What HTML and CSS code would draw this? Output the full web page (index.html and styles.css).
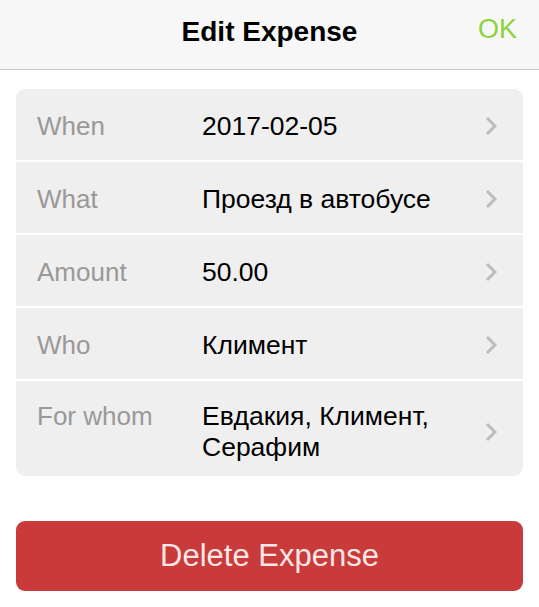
FILE: index.html
```html
<!DOCTYPE html>
<html>
  <head>
    <title>Edit Expense</title>
    <link rel="stylesheet" href="styles.css">
  </head>
  <body>
    <div class="header">
      <div class="title">Edit Expense</div>
      <div class="ok">OK</div>
    </div>

    <div class="card">
      <div class="row">
        <div class="label">When</div>
        <div class="value">2017-02-05</div>
        <svg class="chevron" viewBox="0 0 12 20"><path d="M2 2 L10 10 L2 18" /></svg>
      </div>
      <div class="row">
        <div class="label">What</div>
        <div class="value">Проезд в автобусе</div>
        <svg class="chevron" viewBox="0 0 12 20"><path d="M2 2 L10 10 L2 18" /></svg>
      </div>
      <div class="row">
        <div class="label">Amount</div>
        <div class="value">50.00</div>
        <svg class="chevron" viewBox="0 0 12 20"><path d="M2 2 L10 10 L2 18" /></svg>
      </div>
      <div class="row">
        <div class="label">Who</div>
        <div class="value">Климент</div>
        <svg class="chevron" viewBox="0 0 12 20"><path d="M2 2 L10 10 L2 18" /></svg>
      </div>
      <div class="row tall">
        <div class="label">For whom</div>
        <div class="value">Евдакия, Климент,<br />Серафим</div>
        <svg class="chevron" viewBox="0 0 12 20"><path d="M2 2 L10 10 L2 18" /></svg>
      </div>
    </div>

    <div class="delete">Delete Expense</div>
  </body>
</html>
```

FILE: styles.css
```css
body {
  font-family: "Liberation Sans", Arial, sans-serif;
  margin: 0;
  padding: 0;
  background-color: #fff;
  color: #000;
}
.header {
  height: 69px;
  background-color: #f7f7f7;
  border-bottom: 1px solid #c9c9c9;
  display: flex;
  align-items: center;
  justify-content: center;
  position: relative;
}
.title {
  font-size: 28px;
  font-weight: bold;
  margin-top: -5px;
}
.ok {
  position: absolute;
  right: 22px;
  top: 14px;
  font-size: 27px;
  color: #8cd23a;
}
.card {
  margin: 19px 16px 0;
  background-color: #efefef;
  border-radius: 9px;
  overflow: hidden;
}
.row {
  display: flex;
  align-items: center;
  box-sizing: border-box;
  height: 71px;
  padding: 3px 26px 0 21px;
  font-size: 26px;
}
.row + .row {
  border-top: 2px solid #fff;
  height: 73px;
}
.row.tall {
  height: 97px;
  align-items: flex-start;
  padding-top: 20px;
  line-height: 31px;
}
.label {
  width: 165px;
  color: #999;
}
.value {
  flex: 1;
  font-size: 26.5px;
}
.chevron {
  width: 12px;
  height: 20px;
  fill: none;
  stroke: #bcbcbc;
  stroke-width: 3;
}
.row.tall .chevron {
  align-self: center;
  margin-top: -14px;
}
.delete {
  margin: 45px 16px 0;
  height: 70px;
  border-radius: 9px;
  background-color: #c93a3a;
  color: #fde6e6;
  font-size: 31px;
  display: flex;
  align-items: center;
  justify-content: center;
}
```
